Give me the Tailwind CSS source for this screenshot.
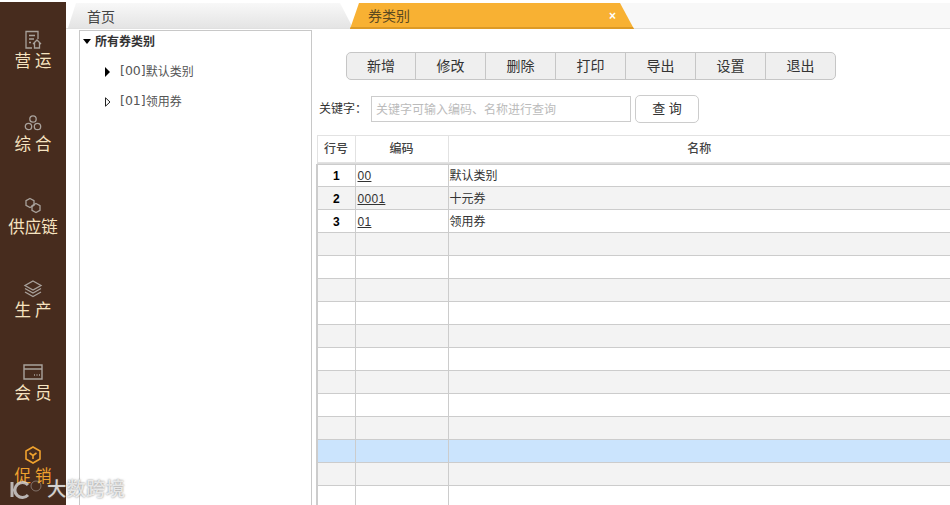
<!DOCTYPE html>
<html lang="zh">
<head>
    <meta charset="UTF-8">
    <title>券类别</title>
    <script src="https://cdn.jsdelivr.net/npm/@tailwindcss/browser@4"></script>
</head>
<body class="h-[505px] w-[950px] overflow-hidden bg-white font-['Liberation_Sans','Noto_Sans_CJK_SC',sans-serif] text-[12px] text-[#333]">
<div class="relative flex h-[505px] w-[950px] overflow-hidden pt-[2px]">
    <!-- Sidebar -->
    <aside class="flex h-[503px] w-[66px] shrink-0 flex-col items-center overflow-hidden bg-[#472c1e] pt-[28px] text-[16.5px] leading-[20px] text-[#f6e3c0]">
        <a class="flex h-[83px] shrink-0 flex-col items-center">
            <svg class="h-[20px] w-[20px]" viewBox="0 0 20 20" fill="none" stroke="#a9a29c" stroke-width="1.300"><path d="M9 18H3V1.500h12V9M6 5.500h6M6 9h5M6 12.500h2M10 14l4-4 4 4M11.500 13v5h5v-5"/></svg>
            <span class="mt-[1px] pl-[4px] tracking-[4px]">营运</span>
        </a>
        <a class="flex h-[83px] shrink-0 flex-col items-center">
            <svg class="h-[20px] w-[20px]" viewBox="0 0 20 20" fill="none" stroke="#a9a29c" stroke-width="1.300"><circle cx="10" cy="6" r="3.200"/><circle cx="5.500" cy="13.500" r="3.200"/><circle cx="14.500" cy="13.500" r="3.200"/></svg>
            <span class="mt-[1px] pl-[4px] tracking-[4px]">综合</span>
        </a>
        <a class="flex h-[83px] shrink-0 flex-col items-center">
            <svg class="h-[20px] w-[20px]" viewBox="0 0 20 20" fill="none" stroke="#a9a29c" stroke-width="1.300"><path d="M7 2.500l4 2.200v4.600l-4 2.200-4-2.200V4.700z"/><path d="M13 7.500l4 2.200v4.600l-4 2.200-4-2.200V9.700z"/></svg>
            <span class="mt-[1px]">供应链</span>
        </a>
        <a class="flex h-[83px] shrink-0 flex-col items-center">
            <svg class="h-[20px] w-[20px]" viewBox="0 0 20 20" fill="none" stroke="#a9a29c" stroke-width="1.300"><path d="M10 2l8 4.500-8 4.500-8-4.500z"/><path d="M2 9.500l8 4.500 8-4.500M2 13l8 4.500 8-4.500"/></svg>
            <span class="mt-[1px] pl-[4px] tracking-[4px]">生产</span>
        </a>
        <a class="flex h-[83px] shrink-0 flex-col items-center">
            <svg class="h-[20px] w-[20px]" viewBox="0 0 20 20" fill="none" stroke="#a9a29c" stroke-width="1.400"><path d="M1 3h18v14H1zM1 7h18"/><path d="M11 13h1M13.500 13h1M16 13h1" stroke-width="1.500"/></svg>
            <span class="mt-[1px] pl-[4px] tracking-[4px]">会员</span>
        </a>
        <a class="flex h-[83px] shrink-0 flex-col items-center text-[#f0a22e]">
            <svg class="h-[20px] w-[20px]" viewBox="0 0 20 20" fill="none" stroke="#f0a22e" stroke-width="1.600"><path d="M10 2l7 4v8l-7 4-7-4V6z"/><path d="M6.500 8l3.500 2.500L13.500 8M10 10.500V14"/></svg>
            <span class="mt-[1px] pl-[4px] tracking-[4px]">促销</span>
        </a>
    </aside>

    <!-- Main -->
    <div class="flex min-w-0 flex-1 flex-col">
        <!-- Tabs -->
        <div class="flex h-[27px] shrink-0 border-b border-[#e0e0e0] pl-[2px] pt-[1px]">
            <div class="h-[25px] w-[285px] shrink-0 bg-gradient-to-b from-[#f8f8f8] to-[#e4e4e4] pl-[19px] text-[14px] leading-[28px] text-[#444] [clip-path:polygon(8px_0,272px_0,285px_100%,0_100%)]">首页</div>
            <div class="relative z-10 -ml-[3px] flex h-[26px] w-[285px] shrink-0 items-center justify-between border-b-2 border-[#dd9a26] bg-[#f8b133] pl-[18px] pr-[19px] pt-[2px] text-[14px] text-[#5d4a20] [clip-path:polygon(9px_0,270px_0,284px_100%,0_100%)]">
                <span>券类别</span>
                <span class="text-[12px] font-bold leading-none text-white">×</span>
            </div>
            <div class="-ml-[16px] h-[25px] flex-1 bg-[#f8f8f8]"></div>
        </div>

        <div class="flex min-h-0 flex-1">
            <!-- Tree -->
            <div class="ml-[13px] mt-[1px] h-[480px] w-[233px] shrink-0 border border-[#c8c8c8] text-[#555]">
                <div class="flex h-[21px] items-center pl-[3px] font-bold text-[#333]">
                    <span class="mr-[4px] h-0 w-0 border-x-[4px] border-t-[5px] border-x-transparent border-t-black"></span>所有券类别
                </div>
                <div class="mt-[9px] flex h-[21px] items-center pl-[25px]">
                    <span class="mr-[10px] h-0 w-0 border-y-[5px] border-l-[5px] border-y-transparent border-l-black"></span><span class="font-['DejaVu_Sans'] text-[12.5px]">[00]</span>默认类别
                </div>
                <div class="mt-[9px] flex h-[21px] items-center pl-[25px]">
                    <svg class="mr-[9px] h-[10px] w-[6px]" viewBox="0 0 6 10" fill="none" stroke="#222"><path d="M.5 .8L5 5 .5 9.200z"/></svg><span class="font-['DejaVu_Sans'] text-[12.5px]">[01]</span>领用券
                </div>
            </div>

            <!-- Content -->
            <div class="ml-[5px] min-w-0 flex-1">
                <div class="ml-[29px] mt-[23px] flex h-[28px] w-[490px] overflow-hidden rounded-[5px] border border-[#c6c6c6] bg-[#efefef] text-[14px] text-[#333]">
                    <button class="w-[69px] border-r border-[#c6c6c6]">新增</button>
                    <button class="w-[70px] border-r border-[#c6c6c6]">修改</button>
                    <button class="w-[70px] border-r border-[#c6c6c6]">删除</button>
                    <button class="w-[70px] border-r border-[#c6c6c6]">打印</button>
                    <button class="w-[70px] border-r border-[#c6c6c6]">导出</button>
                    <button class="w-[70px] border-r border-[#c6c6c6]">设置</button>
                    <button class="flex-1">退出</button>
                </div>
                <div class="mt-[15px] flex h-[28px] items-center pl-[2px]">
                    <span class="w-[52px] text-[#333]">关键字：</span>
                    <input class="h-[26px] w-[260px] border border-[#ccc] px-[4px] pt-[1px] text-[12px] placeholder:text-[#bbb]" placeholder="关键字可输入编码、名称进行查询">
                    <button class="ml-[4px] h-[28px] w-[64px] rounded-[5px] border border-[#ccc] bg-white text-[13px] text-[#333]">查 询</button>
                </div>

                <!-- Grid -->
                <table class="-ml-[1px] mt-[12px] w-[634px] table-fixed border-collapse text-[12px] leading-[20px]">
                    <colgroup><col class="w-[38px]"><col class="w-[93px]"><col></colgroup>
                    <thead>
                        <tr class="h-[27px] border-y border-[#e2e2e2] text-center font-medium text-[#444]">
                            <th class="border-x border-[#e2e2e2] font-medium">行号</th><th class="border-x border-[#e2e2e2] font-medium">编码</th><th class="font-medium">名称</th>
                        </tr>
                        <tr class="h-[2px] bg-[#dcdcdc]"><th colspan="3" class="p-0 text-[0px] leading-[0]"></th></tr>
                    </thead>
                    <tbody>
                        <tr class="h-[22px] bg-white"><td class="border border-l-2 border-[#ccc] text-center font-bold text-black">1</td><td class="border border-[#ccc] pl-[2px] tracking-[0.3px]"><u>00</u></td><td class="border-y border-[#ccc] pl-[1px]">默认类别</td></tr>
                        <tr class="h-[23px] bg-[#f3f3f3]"><td class="border border-l-2 border-[#ccc] pt-[1px] text-center font-bold text-black">2</td><td class="border border-[#ccc] pl-[2px] pt-[1px] tracking-[0.3px]"><u>0001</u></td><td class="border-y border-[#ccc] pl-[1px] pt-[1px]">十元券</td></tr>
                        <tr class="h-[23px] bg-white"><td class="border border-l-2 border-[#ccc] pt-[1px] text-center font-bold text-black">3</td><td class="border border-[#ccc] pl-[2px] pt-[1px] tracking-[0.3px]"><u>01</u></td><td class="border-y border-[#ccc] pl-[1px] pt-[1px]">领用券</td></tr>
                        <tr class="h-[23px] bg-[#f3f3f3]"><td class="border border-l-2 border-[#ccc]"></td><td class="border border-[#ccc]"></td><td class="border-y border-[#ccc]"></td></tr>
                        <tr class="h-[23px] bg-white"><td class="border border-l-2 border-[#ccc]"></td><td class="border border-[#ccc]"></td><td class="border-y border-[#ccc]"></td></tr>
                        <tr class="h-[23px] bg-[#f3f3f3]"><td class="border border-l-2 border-[#ccc]"></td><td class="border border-[#ccc]"></td><td class="border-y border-[#ccc]"></td></tr>
                        <tr class="h-[23px] bg-white"><td class="border border-l-2 border-[#ccc]"></td><td class="border border-[#ccc]"></td><td class="border-y border-[#ccc]"></td></tr>
                        <tr class="h-[23px] bg-[#f3f3f3]"><td class="border border-l-2 border-[#ccc]"></td><td class="border border-[#ccc]"></td><td class="border-y border-[#ccc]"></td></tr>
                        <tr class="h-[23px] bg-white"><td class="border border-l-2 border-[#ccc]"></td><td class="border border-[#ccc]"></td><td class="border-y border-[#ccc]"></td></tr>
                        <tr class="h-[23px] bg-[#f3f3f3]"><td class="border border-l-2 border-[#ccc]"></td><td class="border border-[#ccc]"></td><td class="border-y border-[#ccc]"></td></tr>
                        <tr class="h-[23px] bg-white"><td class="border border-l-2 border-[#ccc]"></td><td class="border border-[#ccc]"></td><td class="border-y border-[#ccc]"></td></tr>
                        <tr class="h-[23px] bg-[#f3f3f3]"><td class="border border-l-2 border-[#ccc]"></td><td class="border border-[#ccc]"></td><td class="border-y border-[#ccc]"></td></tr>
                        <tr class="h-[23px] bg-[#cbe4fd]"><td class="border border-l-2 border-[#ccc]"></td><td class="border border-[#ccc]"></td><td class="border-y border-[#ccc]"></td></tr>
                        <tr class="h-[23px] bg-[#f3f3f3]"><td class="border border-l-2 border-[#ccc]"></td><td class="border border-[#ccc]"></td><td class="border-y border-[#ccc]"></td></tr>
                        <tr class="h-[23px] bg-white"><td class="border border-l-2 border-[#ccc]"></td><td class="border border-[#ccc]"></td><td class="border-y border-[#ccc]"></td></tr>
                    </tbody>
                </table>
            </div>
        </div>
    </div>

    <!-- Watermark -->
    <div class="pointer-events-none absolute left-[9px] top-[475px] flex items-center text-[19.5px] font-medium text-white/75 [text-shadow:0_0_2px_rgba(90,90,90,0.8)]">
        <svg class="mr-[2px] h-[24px] w-[36px]" viewBox="0 0 36 24" fill="none" stroke="#d8d8d8" stroke-opacity="0.8" stroke-width="3"><path d="M3 4v15M19 7a7.500 7.500 0 1 0 0 10"/><circle cx="27" cy="8" r="5" stroke-width="1" stroke-opacity="0.4"/></svg>
        <span>大数跨境</span>
    </div>
</div>
</body>
</html>
